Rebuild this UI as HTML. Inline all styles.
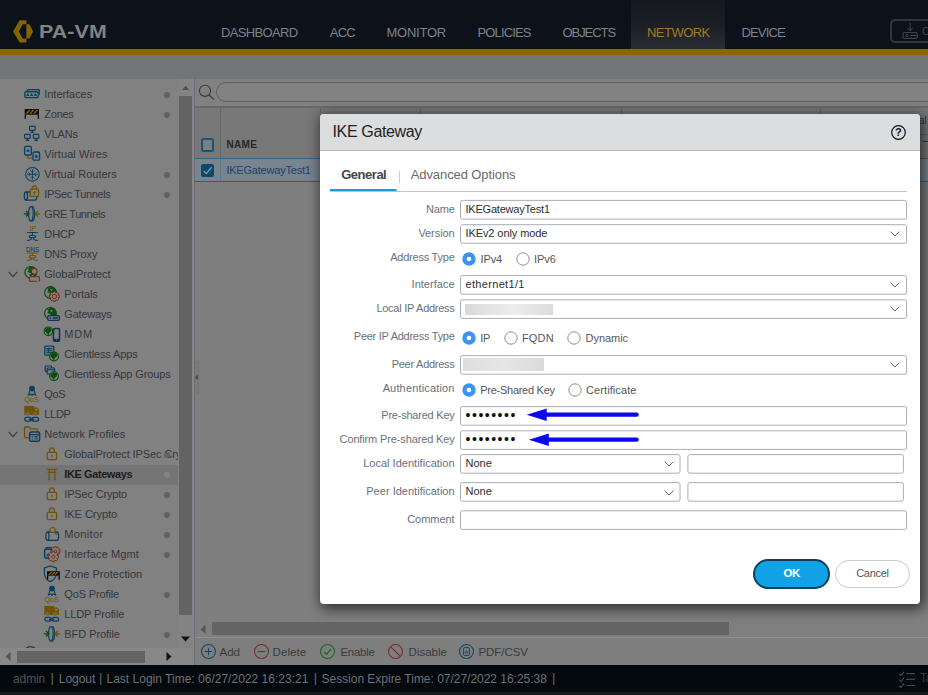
<!DOCTYPE html>
<html><head><meta charset="utf-8"><title>PA-VM</title>
<style>
html,body{margin:0;padding:0;}
body{width:928px;height:695px;overflow:hidden;position:relative;background:#7f7f7f;font-family:"Liberation Sans",sans-serif;}
.a{position:absolute;box-sizing:border-box;}
.t{position:absolute;white-space:nowrap;}
svg{overflow:visible;}
</style></head><body>
<div class="a" style="left:0.00px;top:0.00px;width:928.00px;height:49.00px;background:#0d111a;"></div>
<div class="a" style="left:631.00px;top:0.00px;width:94.00px;height:49.00px;background:linear-gradient(#15181f 0%,#1b1e25 50%,#2a2d33 100%);"></div>
<div class="a" style="left:0.00px;top:49.00px;width:928.00px;height:6.00px;background:#866700;"></div>
<div class="a" style="left:0.00px;top:55.00px;width:928.00px;height:24.00px;background:#737476;"></div>
<svg class="a" style="left:13.00px;top:19.50px;" width="20.5" height="22.8" viewBox="0 0 20.5 22.8"><path d="M6.7 0.2 L13.4 0.2 L13.4 4.3 L9.7 4.3 L5.8 11.4 L9.7 18.4 L13.4 18.4 L13.4 22.6 L6.7 22.6 L0 11.4 Z" fill="#846400"/><path d="M13.4 4.3 L16.5 4.3 L20.1 11.4 L16.5 18.4 L13.4 18.4 Z" fill="#846400"/></svg>
<span class="t" style="left:38.6px;top:21.7px;font-size:18.5px;line-height:20.6px;font-weight:bold;color:#828282;transform-origin:0 0;transform:scaleX(1.155);letter-spacing:0.1px;">PA-VM</span>
<span class="t " style="left:221.00px;top:26.03px;font-size:13px;line-height:14.52px;letter-spacing:-0.661px;color:#7d838a;">DASHBOARD</span>
<span class="t " style="left:329.80px;top:26.03px;font-size:13px;line-height:14.52px;letter-spacing:-0.816px;color:#7d838a;">ACC</span>
<span class="t " style="left:386.50px;top:26.03px;font-size:13px;line-height:14.52px;letter-spacing:-0.235px;color:#7d838a;">MONITOR</span>
<span class="t " style="left:477.50px;top:26.03px;font-size:13px;line-height:14.52px;letter-spacing:-0.871px;color:#7d838a;">POLICIES</span>
<span class="t " style="left:562.50px;top:26.03px;font-size:13px;line-height:14.52px;letter-spacing:-1.065px;color:#7d838a;">OBJECTS</span>
<span class="t " style="left:647.00px;top:26.03px;font-size:13px;line-height:14.52px;letter-spacing:-0.535px;color:#a37b20;">NETWORK</span>
<span class="t " style="left:741.50px;top:26.03px;font-size:13px;line-height:14.52px;letter-spacing:-0.850px;color:#7d838a;">DEVICE</span>
<div class="a" style="left:890.00px;top:19.00px;width:50.00px;height:24.20px;border:2.1px solid #31353c;border-radius:5px;"></div>
<svg class="a" style="left:901.50px;top:23.00px;" width="16" height="16" viewBox="0 0 16 16"><g fill="none" stroke="#474b52" stroke-width="1"><path d="M8.1 0.1 V7.6 M5.7 5.1 L8.1 7.7 L10.5 5.1"/><rect x="1.1" y="9.6" width="14.1" height="5.8" rx="1"/><circle cx="4.9" cy="12.5" r="1.05"/><path d="M8.8 12.5 H14.6"/></g></svg>
<span class="t " style="left:922.00px;top:25.34px;font-size:11px;line-height:12.29px;letter-spacing:0.044px;color:#43474e;">Commit</span>
<div class="a" style="left:0.00px;top:79.00px;width:178.00px;height:586.00px;background:#818181;"></div>
<div class="a" style="left:0.00px;top:465.00px;width:178.00px;height:20.00px;background:#747474;"></div>
<div class="a" style="left:177.50px;top:79.00px;width:15.00px;height:570.00px;background:#838383;"></div>
<div class="a" style="left:179.00px;top:96.00px;width:12.80px;height:518.50px;background:#636363;"></div>
<svg class="a" style="left:181.00px;top:85.00px;" width="9" height="6" viewBox="0 0 9 6"><path d="M1 4.9 L4.6 0.8 L8.2 4.9 Z" fill="#505050"/></svg>
<svg class="a" style="left:181.00px;top:636.00px;" width="9" height="6" viewBox="0 0 9 6"><path d="M0 0.5 L4.5 5.5 L9 0.5 Z" fill="#111"/></svg>
<div class="a" style="left:192.00px;top:79.00px;width:2.80px;height:586.00px;background:#868686;border-right:1px solid #686d75;"></div>
<div class="a" style="left:0.00px;top:648.00px;width:192.30px;height:17.00px;background:#888;"></div>
<div class="a" style="left:17.00px;top:650.50px;width:127.50px;height:12.00px;background:#646464;"></div>
<svg class="a" style="left:5.00px;top:652.00px;" width="6" height="9" viewBox="0 0 6 9"><path d="M5.5 0 L0.5 4.5 L5.5 9 Z" fill="#555"/></svg>
<svg class="a" style="left:166.00px;top:652.00px;" width="6" height="9" viewBox="0 0 6 9"><path d="M0.5 0 L5.5 4.5 L0.5 9 Z" fill="#111"/></svg>
<div class="a" style="left:0;top:79px;width:177.5px;height:569px;overflow:hidden;">
<span class="t " style="left:44.30px;top:9.04px;font-size:11px;line-height:12.29px;letter-spacing:-0.050px;color:#35353b;">Interfaces</span>
<svg class="a" style="left:163.00px;top:12.00px;" width="8" height="8" viewBox="0 0 8 8"><circle cx="4" cy="4.1" r="3.05" fill="#626262"/></svg>
<span class="t " style="left:44.30px;top:29.05px;font-size:11px;line-height:12.29px;letter-spacing:-0.254px;color:#35353b;">Zones</span>
<svg class="a" style="left:163.00px;top:32.00px;" width="8" height="8" viewBox="0 0 8 8"><circle cx="4" cy="4.1" r="3.05" fill="#626262"/></svg>
<span class="t " style="left:44.30px;top:49.05px;font-size:11px;line-height:12.29px;letter-spacing:-0.139px;color:#35353b;">VLANs</span>
<span class="t " style="left:44.30px;top:69.05px;font-size:11px;line-height:12.29px;letter-spacing:0.084px;color:#35353b;">Virtual Wires</span>
<span class="t " style="left:44.30px;top:89.05px;font-size:11px;line-height:12.29px;letter-spacing:-0.010px;color:#35353b;">Virtual Routers</span>
<svg class="a" style="left:163.00px;top:92.00px;" width="8" height="8" viewBox="0 0 8 8"><circle cx="4" cy="4.1" r="3.05" fill="#626262"/></svg>
<span class="t " style="left:44.30px;top:109.05px;font-size:11px;line-height:12.29px;letter-spacing:-0.373px;color:#35353b;">IPSec Tunnels</span>
<svg class="a" style="left:163.00px;top:112.00px;" width="8" height="8" viewBox="0 0 8 8"><circle cx="4" cy="4.1" r="3.05" fill="#626262"/></svg>
<span class="t " style="left:44.30px;top:129.04px;font-size:11px;line-height:12.29px;letter-spacing:-0.431px;color:#35353b;">GRE Tunnels</span>
<span class="t " style="left:44.30px;top:149.04px;font-size:11px;line-height:12.29px;letter-spacing:-0.113px;color:#35353b;">DHCP</span>
<span class="t " style="left:44.30px;top:169.04px;font-size:11px;line-height:12.29px;letter-spacing:-0.160px;color:#35353b;">DNS Proxy</span>
<span class="t " style="left:44.30px;top:189.04px;font-size:11px;line-height:12.29px;letter-spacing:-0.027px;color:#35353b;">GlobalProtect</span>
<span class="t " style="left:64.30px;top:209.04px;font-size:11px;line-height:12.29px;letter-spacing:-0.130px;color:#35353b;">Portals</span>
<span class="t " style="left:64.30px;top:229.04px;font-size:11px;line-height:12.29px;letter-spacing:-0.200px;color:#35353b;">Gateways</span>
<span class="t " style="left:64.30px;top:249.04px;font-size:11px;line-height:12.29px;letter-spacing:0.840px;color:#35353b;">MDM</span>
<span class="t " style="left:64.30px;top:269.05px;font-size:11px;line-height:12.29px;letter-spacing:-0.128px;color:#35353b;">Clientless Apps</span>
<span class="t " style="left:64.30px;top:289.05px;font-size:11px;line-height:12.29px;letter-spacing:-0.118px;color:#35353b;">Clientless App Groups</span>
<span class="t " style="left:44.30px;top:309.05px;font-size:11px;line-height:12.29px;letter-spacing:-0.412px;color:#35353b;">QoS</span>
<span class="t " style="left:44.30px;top:329.05px;font-size:11px;line-height:12.29px;letter-spacing:-0.312px;color:#35353b;">LLDP</span>
<span class="t " style="left:44.30px;top:349.05px;font-size:11px;line-height:12.29px;letter-spacing:0.058px;color:#35353b;">Network Profiles</span>
<span class="t " style="left:64.30px;top:369.05px;font-size:11px;line-height:12.29px;letter-spacing:-0.102px;color:#35353b;">GlobalProtect IPSec Crypto</span>
<svg class="a" style="left:163.00px;top:372.00px;" width="8" height="8" viewBox="0 0 8 8"><circle cx="4" cy="4.1" r="3.05" fill="#626262"/></svg>
<span class="t " style="left:64.30px;top:389.05px;font-size:11px;line-height:12.29px;letter-spacing:-0.411px;color:#1c1c1c;font-weight:bold;">IKE Gateways</span>
<svg class="a" style="left:163.00px;top:392.00px;" width="8" height="8" viewBox="0 0 8 8"><circle cx="4" cy="4.1" r="3.05" fill="#848484"/></svg>
<span class="t " style="left:64.30px;top:409.05px;font-size:11px;line-height:12.29px;letter-spacing:-0.173px;color:#35353b;">IPSec Crypto</span>
<svg class="a" style="left:163.00px;top:412.00px;" width="8" height="8" viewBox="0 0 8 8"><circle cx="4" cy="4.1" r="3.05" fill="#626262"/></svg>
<span class="t " style="left:64.30px;top:429.05px;font-size:11px;line-height:12.29px;letter-spacing:-0.041px;color:#35353b;">IKE Crypto</span>
<svg class="a" style="left:163.00px;top:432.00px;" width="8" height="8" viewBox="0 0 8 8"><circle cx="4" cy="4.1" r="3.05" fill="#626262"/></svg>
<span class="t " style="left:64.30px;top:449.05px;font-size:11px;line-height:12.29px;letter-spacing:0.362px;color:#35353b;">Monitor</span>
<svg class="a" style="left:163.00px;top:452.00px;" width="8" height="8" viewBox="0 0 8 8"><circle cx="4" cy="4.1" r="3.05" fill="#626262"/></svg>
<span class="t " style="left:64.30px;top:469.05px;font-size:11px;line-height:12.29px;letter-spacing:0.083px;color:#35353b;">Interface Mgmt</span>
<svg class="a" style="left:163.00px;top:472.00px;" width="8" height="8" viewBox="0 0 8 8"><circle cx="4" cy="4.1" r="3.05" fill="#626262"/></svg>
<span class="t " style="left:64.30px;top:489.05px;font-size:11px;line-height:12.29px;letter-spacing:0.016px;color:#35353b;">Zone Protection</span>
<span class="t " style="left:64.30px;top:509.05px;font-size:11px;line-height:12.29px;letter-spacing:-0.142px;color:#35353b;">QoS Profile</span>
<svg class="a" style="left:163.00px;top:512.00px;" width="8" height="8" viewBox="0 0 8 8"><circle cx="4" cy="4.1" r="3.05" fill="#626262"/></svg>
<span class="t " style="left:64.30px;top:529.04px;font-size:11px;line-height:12.29px;letter-spacing:-0.140px;color:#35353b;">LLDP Profile</span>
<span class="t " style="left:64.30px;top:549.04px;font-size:11px;line-height:12.29px;letter-spacing:-0.057px;color:#35353b;">BFD Profile</span>
<svg class="a" style="left:163.00px;top:552.00px;" width="8" height="8" viewBox="0 0 8 8"><circle cx="4" cy="4.1" r="3.05" fill="#626262"/></svg>
</div>
<svg class="a" style="left:8.00px;top:270.50px;" width="10" height="7" viewBox="0 0 10 7"><path d="M0.7 0.8 L5 5.6 L9.3 0.8" fill="none" stroke="#3a3a3a" stroke-width="1.1"/></svg>
<svg class="a" style="left:8.00px;top:430.50px;" width="10" height="7" viewBox="0 0 10 7"><path d="M0.7 0.8 L5 5.6 L9.3 0.8" fill="none" stroke="#3a3a3a" stroke-width="1.1"/></svg>
<svg class="a" style="left:24.00px;top:82.00px;" width="20" height="24" viewBox="0 -12 20 24"><path d="M3.2 -3.1 V-3.6 a0.8 0.8 0 0 1 0.8 -0.8 H14.5 a0.8 0.8 0 0 1 0.8 0.8 V-0.3 a0.8 0.8 0 0 1 -0.8 0.8" fill="none" stroke="#083f5f" stroke-width="1.24"/><rect x="0.8" y="-2.3" width="13.5" height="5.9" rx="1.5" fill="none" stroke="#083f5f" stroke-width="1.35"/><path d="M2.5 2 v-1.4 h0.7 v-1 h1.2 v1 h0.7 v1.4 Z M6.3 2 v-1.4 h0.7 v-1 h1.2 v1 h0.7 v1.4 Z M10.1 2 v-1.4 h0.7 v-1 h1.2 v1 h0.7 v1.4 Z" fill="#083f5f"/></svg>
<svg class="a" style="left:24.00px;top:102.00px;" width="20" height="24" viewBox="0 -12 20 24"><rect x="0.7" y="-5" width="14.3" height="5.7" fill="#0a0a0a"/><path d="M1.6 -0.2 l3 -3.9 l2 0 l-3 3.9 Z" fill="#7d6200"/><path d="M5.35 -0.2 l3 -3.9 l2 0 l-3 3.9 Z" fill="#7d6200"/><path d="M9.1 -0.2 l3 -3.9 l2 0 l-3 3.9 Z" fill="#7d6200"/><path d="M1.3 0.7 v4.1 M14.4 0.7 v4.1" stroke="#0a0a0a" stroke-width="1.30"/></svg>
<svg class="a" style="left:24.00px;top:122.00px;" width="20" height="24" viewBox="0 -12 20 24"><rect x="5.5" y="-7.7" width="5.6" height="4" rx="0.8" fill="none" stroke="#083f5f" stroke-width="1.19"/><path d="M8.3 -3.7 v1.8 M6.5 -1.7 h3.6" stroke="#083f5f" stroke-width="1.19"/><rect x="0.6" y="0.4" width="5.6" height="4" rx="0.8" fill="none" stroke="#083f5f" stroke-width="1.19"/><path d="M3.4 4.4 v1.8 M1.6 6.4 h3.6" stroke="#083f5f" stroke-width="1.19"/><rect x="9.3" y="0.4" width="5.6" height="4" rx="0.8" fill="none" stroke="#083f5f" stroke-width="1.19"/><path d="M12.1 4.4 v1.8 M10.3 6.4 h3.6" stroke="#083f5f" stroke-width="1.19"/></svg>
<svg class="a" style="left:24.00px;top:142.00px;" width="20" height="24" viewBox="0 -12 20 24"><path d="M3.6 1 V3.2 a1 1 0 0 0 1 1 H9" fill="none" stroke="#705200" stroke-width="1.30"/><rect x="0.6" y="-7.6" width="6.8" height="8.6" rx="1.2" fill="#6c8494" stroke="#083f5f" stroke-width="1.30"/><path d="M2.6 -2.2 v-1.6 h0.8 v-1 h1.2 v1 h0.8 v1.6 Z" fill="#083f5f"/><rect x="9" y="-2" width="6.6" height="8.2" rx="1.2" fill="#6c8494" stroke="#083f5f" stroke-width="1.30"/><path d="M10.9 3.4 v-1.6 h0.8 v-1 h1.2 v1 h0.8 v1.6 Z" fill="#083f5f"/></svg>
<svg class="a" style="left:24.00px;top:162.00px;" width="20" height="24" viewBox="0 -12 20 24"><circle cx="8.4" cy="0.3" r="6.8" fill="none" stroke="#083f5f" stroke-width="1.08"/><path d="M8.4 -4.9 V5.5 M3.2 0.3 H13.6" fill="none" stroke="#083f5f" stroke-width="0.92"/><path d="M6.5 -3.6 L8.4 -1.7 L10.3 -3.6 M6.5 4.2 L8.4 2.3 L10.3 4.2 M4.5 -1.6 L6.4 0.3 L4.5 2.2 M12.3 -1.6 L10.4 0.3 L12.3 2.2" fill="none" stroke="#083f5f" stroke-width="0.92"/></svg>
<svg class="a" style="left:24.00px;top:182.00px;" width="20" height="24" viewBox="0 -12 20 24"><path d="M1.9 -2 H11.2 a1.6 4.1 0 0 1 0 8.2 H1.9" fill="none" stroke="#083f5f" stroke-width="1.30"/><ellipse cx="1.9" cy="2.1" rx="1.6" ry="4.1" fill="none" stroke="#083f5f" stroke-width="1.30"/><rect x="6.3" y="-4.8" width="8.2" height="7.2" rx="1" fill="#818181"/><rect x="6.3" y="-4.8" width="8.2" height="7.2" rx="1" fill="none" stroke="#6e5206" stroke-width="1.30"/><path d="M8.35 -4.8 v-1.1 a2.05 2.214 0 0 1 4.1 0 v1.1" fill="none" stroke="#6e5206" stroke-width="1.19"/><rect x="9.6" y="-2.1" width="1.6" height="1.6" fill="#6e5206"/><circle cx="10.4" cy="-1.7" r="1.1" fill="#6e5206"/><path d="M10.4 -1.5 V0.6" stroke="#6e5206" stroke-width="0.97"/></svg>
<svg class="a" style="left:24.00px;top:202.00px;" width="20" height="24" viewBox="0 -12 20 24"><ellipse cx="6.9" cy="-0.2" rx="2.3" ry="7.3" fill="none" stroke="#083f5f" stroke-width="1.19"/><path d="M7.4 -7.4 H8.6 A2.3 7.3 0 0 1 8.6 7 H7.4" fill="none" stroke="#083f5f" stroke-width="1.08"/><path d="M-0.2 -0.2 H4.6 M2 -3 L4.8 -0.2 L2 2.6" fill="none" stroke="#0b4c10" stroke-width="1.35"/><path d="M16 -0.2 H11.2 M13.8 -3 L11 -0.2 L13.8 2.6" fill="none" stroke="#705200" stroke-width="1.35"/></svg>
<svg class="a" style="left:24.00px;top:222.00px;" width="20" height="24" viewBox="0 -12 20 24"><text x="5.6" y="-2.6" font-family="Liberation Sans,sans-serif" font-size="6.3" font-weight="normal" fill="#705200" textLength="6.8" lengthAdjust="spacingAndGlyphs">IP</text><path d="M3.1 -1.4 H13.8 M8.4 -1.4 V1.1 M7.7 3.8 C7.7 6.4 5.5 6.4 3.1 6.4 M9.1 3.8 C9.1 6.4 11.3 6.4 13.8 6.4" fill="none" stroke="#083f5f" stroke-width="1.03"/><ellipse cx="8.4" cy="2.5" rx="3.2" ry="1.35" fill="none" stroke="#083f5f" stroke-width="1.03"/></svg>
<svg class="a" style="left:24.00px;top:242.00px;" width="20" height="24" viewBox="0 -12 20 24"><text x="1.9" y="-2.4" font-family="Liberation Sans,sans-serif" font-size="6.3" font-weight="normal" fill="#083f5f" textLength="13.4" lengthAdjust="spacingAndGlyphs">DNS</text><path d="M3.1 -0.9 H13.8 M8.4 -0.9 V1.3 M7.7 4 C7.7 6.4 5.5 6.4 3.1 6.4 M9.1 4 C9.1 6.4 11.3 6.4 13.8 6.4" fill="none" stroke="#705200" stroke-width="1.03"/><ellipse cx="8.4" cy="2.7" rx="3.2" ry="1.35" fill="none" stroke="#705200" stroke-width="1.03"/></svg>
<svg class="a" style="left:24.00px;top:262.00px;" width="20" height="24" viewBox="0 -12 20 24"><circle cx="6.7" cy="-1.7" r="5.8" fill="#818181" stroke="#0b4c10" stroke-width="1.13"/><path d="M6.12 -7.5 A5.8 5.8 0 0 1 8.15 3.926 L5.25 0.91 L7.28 -0.83 L3.51 -1.99 L4.96 -4.02 L3.22 -5.18 L4.96 -5.76 Z" fill="#0b4c10"/><path d="M6.41 -5.18 l2.9 0.696 l-1.856 1.74 Z M7.28 1.2 l2.436 -0.696 l-0.87 2.088 Z" fill="#818181"/><circle cx="10.3" cy="-2.6" r="2.95" fill="#818181" stroke="#74280c" stroke-width="1.03"/><path d="M5.4 7.2 V3.9 a1.2 1.2 0 0 1 1.2 -1.2 H15.3 V7.4 M5.4 7.2 H13.2" fill="#818181" stroke="#74280c" stroke-width="1.03"/></svg>
<svg class="a" style="left:44.00px;top:282.00px;" width="20" height="24" viewBox="0 -12 20 24"><circle cx="6.4" cy="-1.6" r="5.8" fill="#818181" stroke="#0b4c10" stroke-width="1.13"/><path d="M5.82 -7.4 A5.8 5.8 0 0 1 7.85 4.026 L4.95 1.01 L6.98 -0.73 L3.21 -1.89 L4.66 -3.92 L2.92 -5.08 L4.66 -5.66 Z" fill="#0b4c10"/><path d="M6.11 -5.08 l2.9 0.696 l-1.856 1.74 Z M6.98 1.3 l2.436 -0.696 l-0.87 2.088 Z" fill="#818181"/><path d="M14.07 1.08 L15.39 1.35 L15.39 3.45 L14.07 3.72 L13.93 4.06 L14.67 5.19 L13.19 6.67 L12.06 5.93 L11.72 6.07 L11.45 7.39 L9.35 7.39 L9.08 6.07 L8.74 5.93 L7.61 6.67 L6.13 5.19 L6.87 4.06 L6.73 3.72 L5.41 3.45 L5.41 1.35 L6.73 1.08 L6.87 0.74 L6.13 -0.39 L7.61 -1.87 L8.74 -1.13 L9.08 -1.27 L9.35 -2.59 L11.45 -2.59 L11.72 -1.27 L12.06 -1.13 L13.19 -1.87 L14.67 -0.39 L13.93 0.74 Z" fill="#818181" stroke="#74280c" stroke-width="0.97" stroke-linejoin="round"/><circle cx="10.4" cy="2.4" r="2.2" fill="none" stroke="#74280c" stroke-width="0.97"/></svg>
<svg class="a" style="left:44.00px;top:302.00px;" width="20" height="24" viewBox="0 -12 20 24"><circle cx="6.4" cy="-0.7" r="5.8" fill="#818181" stroke="#0b4c10" stroke-width="1.13"/><path d="M5.82 -6.5 A5.8 5.8 0 0 1 7.85 4.926 L4.95 1.91 L6.98 0.17 L3.21 -0.99 L4.66 -3.02 L2.92 -4.18 L4.66 -4.76 Z" fill="#0b4c10"/><path d="M6.11 -4.18 l2.9 0.696 l-1.856 1.74 Z M6.98 2.2 l2.436 -0.696 l-0.87 2.088 Z" fill="#818181"/><rect x="3.8" y="1.7" width="11.6" height="4.6" rx="1.3" fill="#818181" stroke="#0a3352" stroke-width="1.30"/><path d="M5.6 4 h1.5 M8.6 4 h5.4" stroke="#0a3352" stroke-width="1.40"/></svg>
<svg class="a" style="left:44.00px;top:322.00px;" width="20" height="24" viewBox="0 -12 20 24"><circle cx="4.4" cy="-2.7" r="4.3" fill="#818181" stroke="#0b4c10" stroke-width="1.13"/><path d="M1.39 -4.85 l2.58 -1.72 l3.655 1.29 l-0.43 2.58 l-2.15 1.72 l-0.43 2.58 l-1.72 -2.58 l-1.935 -1.505 Z" fill="#0b4c10"/><rect x="9.5" y="-5.4" width="6" height="12.6" rx="1.3" fill="#818181" stroke="#0a3352" stroke-width="1.51"/><path d="M9.6 5.9 h5.8" stroke="#0a3352" stroke-width="2.16"/><circle cx="12.5" cy="6" r="0.5" fill="#818181"/></svg>
<svg class="a" style="left:44.00px;top:342.00px;" width="20" height="24" viewBox="0 -12 20 24"><rect x="0.8" y="-7.8" width="9" height="9" rx="0.8" fill="none" stroke="#083f5f" stroke-width="1.30"/><path d="M2.2 -5.4 h6.2 M2.2 -3.3 h6.2 M2.2 -1.2 h6.2 M4.4 -5.4 v4.2" stroke="#083f5f" stroke-width="1.08"/><circle cx="10" cy="2.5" r="4.4" fill="#818181" stroke="#0b4c10" stroke-width="1.13"/><path d="M6.92 0.3 l2.64 -1.76 l3.74 1.32 l-0.44 2.64 l-2.2 1.76 l-0.44 2.64 l-1.76 -2.64 l-1.98 -1.54 Z" fill="#0b4c10"/></svg>
<svg class="a" style="left:44.00px;top:362.00px;" width="20" height="24" viewBox="0 -12 20 24"><rect x="1.2" y="-8" width="6.4" height="5.6" rx="0.8" fill="none" stroke="#083f5f" stroke-width="1.19"/><rect x="3.2" y="-6" width="7.4" height="6" rx="0.8" fill="#818181" stroke="#083f5f" stroke-width="1.19"/><path d="M3.4 -4.2 h7" stroke="#083f5f" stroke-width="1.08"/><circle cx="10" cy="2.2" r="4.4" fill="#818181" stroke="#0b4c10" stroke-width="1.13"/><path d="M6.92 0 l2.64 -1.76 l3.74 1.32 l-0.44 2.64 l-2.2 1.76 l-0.44 2.64 l-1.76 -2.64 l-1.98 -1.54 Z" fill="#0b4c10"/></svg>
<svg class="a" style="left:24.00px;top:382.00px;" width="20" height="24" viewBox="0 -12 20 24"><circle cx="8" cy="-5.4" r="2.9" fill="#083f5f"/><path d="M6 -3.6 L4.4 1 L6.8 0 L8 1.4 L9.2 0 L11.6 1 L10 -3.6" fill="none" stroke="#083f5f" stroke-width="1.08"/><text x="0.4" y="7.7" font-family="Liberation Sans,sans-serif" font-size="7.4" fill="#705200" textLength="14.6" lengthAdjust="spacingAndGlyphs">QoS</text></svg>
<svg class="a" style="left:24.00px;top:402.00px;" width="20" height="24" viewBox="0 -12 20 24"><path d="M0.3 -8 h9 a1 1 0 0 1 1 1 v0.6 h3 l1.7 2 v5.4 h-14.7 Z" fill="#705200"/><rect x="11.2" y="-5.3" width="2.3" height="1.8" fill="#818181"/><circle cx="3.6" cy="0.2" r="1.8" fill="#705200" stroke="#818181" stroke-width="0.65"/><circle cx="11.3" cy="0.2" r="1.8" fill="#705200" stroke="#818181" stroke-width="0.65"/><circle cx="3.6" cy="0.2" r="0.6" fill="#818181"/><circle cx="11.3" cy="0.2" r="0.6" fill="#818181"/><rect x="0.8" y="3.3" width="6.4" height="3.9" rx="1.95" fill="none" stroke="#083f5f" stroke-width="1.30"/><rect x="8.2" y="3.3" width="6.4" height="3.9" rx="1.95" fill="none" stroke="#083f5f" stroke-width="1.30"/><path d="M5 5.25 H10.4" stroke="#083f5f" stroke-width="1.30"/></svg>
<svg class="a" style="left:24.00px;top:422.00px;" width="20" height="24" viewBox="0 -12 20 24"><path d="M0.6 3.6 V-6.2 a0.8 0.8 0 0 1 0.8 -0.8 H5 l1.6 1.8 H12.6 a0.8 0.8 0 0 1 0.8 0.8 V-2.4 M0.6 3.6 H5" fill="none" stroke="#705200" stroke-width="1.30"/><rect x="5.6" y="-2" width="10" height="9.2" rx="1.4" fill="#818181" stroke="#083f5f" stroke-width="1.40"/><path d="M5.8 0.6 H15.4" stroke="#083f5f" stroke-width="1.30"/><path d="M7.6 2.8 h1.6 M10.4 2.8 h3.4 M7.6 5 h1.6 M10.4 5 h3.4" stroke="#083f5f" stroke-width="1.19"/></svg>
<svg class="a" style="left:44.00px;top:442.00px;" width="20" height="24" viewBox="0 -12 20 24"><rect x="3.2" y="-1.6" width="9.4" height="7.2" rx="1" fill="none" stroke="#6e5206" stroke-width="1.30"/><path d="M5.55 -1.6 v-2 a2.35 2.538 0 0 1 4.7 0 v2" fill="none" stroke="#6e5206" stroke-width="1.19"/><rect x="7.1" y="1.1" width="1.6" height="1.6" fill="#6e5206"/></svg>
<svg class="a" style="left:44.00px;top:482.00px;" width="20" height="24" viewBox="0 -12 20 24"><rect x="3.2" y="-1.6" width="9.4" height="7.2" rx="1" fill="none" stroke="#6e5206" stroke-width="1.30"/><path d="M5.55 -1.6 v-2 a2.35 2.538 0 0 1 4.7 0 v2" fill="none" stroke="#6e5206" stroke-width="1.19"/><rect x="7.1" y="1.1" width="1.6" height="1.6" fill="#6e5206"/></svg>
<svg class="a" style="left:44.00px;top:502.00px;" width="20" height="24" viewBox="0 -12 20 24"><rect x="3.2" y="-1.6" width="9.4" height="7.2" rx="1" fill="none" stroke="#6e5206" stroke-width="1.30"/><path d="M5.55 -1.6 v-2 a2.35 2.538 0 0 1 4.7 0 v2" fill="none" stroke="#6e5206" stroke-width="1.19"/><rect x="7.1" y="1.1" width="1.6" height="1.6" fill="#6e5206"/></svg>
<svg class="a" style="left:44.00px;top:462.00px;" width="20" height="24" viewBox="0 -12 20 24"><path d="M2.6 -5.2 Q8 -3.6 13.4 -5.2" fill="none" stroke="#6e5206" stroke-width="1.40"/><path d="M3.6 -1.6 H12.4 M5.2 -4.2 V5.4 M10.8 -4.2 V5.4 M4.2 5.6 h2 M9.8 5.6 h2" fill="none" stroke="#6e5206" stroke-width="1.19"/></svg>
<svg class="a" style="left:44.00px;top:522.00px;" width="20" height="24" viewBox="0 -12 20 24"><path d="M3.4 -2 H13 a1.6 4.2 0 0 1 0 8.4 H3.4" fill="none" stroke="#083f5f" stroke-width="1.30"/><ellipse cx="3.4" cy="2.2" rx="1.6" ry="4.2" fill="none" stroke="#083f5f" stroke-width="1.30"/><circle cx="8.6" cy="-4" r="2.6" fill="#818181" stroke="#6e5206" stroke-width="1.03"/><path d="M10.5 -2.1 L12.8 0.9" stroke="#6e5206" stroke-width="1.19"/></svg>
<svg class="a" style="left:44.00px;top:542.00px;" width="20" height="24" viewBox="0 -12 20 24"><path d="M2 -5 V-6.4 H8" fill="none" stroke="#083f5f" stroke-width="1.08"/><rect x="0.6" y="-4.8" width="8.6" height="8.8" rx="1.2" fill="none" stroke="#083f5f" stroke-width="1.40"/><path d="M2.6 2 v-1.6 h0.8 v-1 h1.2 v1 h0.8 v1.6 Z" fill="#083f5f"/><path d="M14.79 -3.89 L16.10 -3.67 L16.10 -1.73 L14.79 -1.51 L14.67 -1.21 L15.44 -0.13 L14.07 1.24 L12.99 0.47 L12.69 0.59 L12.47 1.90 L10.53 1.90 L10.31 0.59 L10.01 0.47 L8.93 1.24 L7.56 -0.13 L8.33 -1.21 L8.21 -1.51 L6.90 -1.73 L6.90 -3.67 L8.21 -3.89 L8.33 -4.19 L7.56 -5.27 L8.93 -6.64 L10.01 -5.87 L10.31 -5.99 L10.53 -7.30 L12.47 -7.30 L12.69 -5.99 L12.99 -5.87 L14.07 -6.64 L15.44 -5.27 L14.67 -4.19 Z" fill="#818181" stroke="#74280c" stroke-width="0.86" stroke-linejoin="round"/><circle cx="11.5" cy="-2.7" r="1.3" fill="none" stroke="#74280c" stroke-width="0.86"/><path d="M13.06 1.25 L14.49 1.51 L14.49 3.69 L13.06 3.95 L12.92 4.30 L13.74 5.50 L12.20 7.04 L11.00 6.22 L10.65 6.36 L10.39 7.79 L8.21 7.79 L7.95 6.36 L7.60 6.22 L6.40 7.04 L4.86 5.50 L5.68 4.30 L5.54 3.95 L4.11 3.69 L4.11 1.51 L5.54 1.25 L5.68 0.90 L4.86 -0.30 L6.40 -1.84 L7.60 -1.02 L7.95 -1.16 L8.21 -2.59 L10.39 -2.59 L10.65 -1.16 L11.00 -1.02 L12.20 -1.84 L13.74 -0.30 L12.92 0.90 Z" fill="#818181" stroke="#74280c" stroke-width="0.92" stroke-linejoin="round"/><circle cx="9.3" cy="2.6" r="1.6" fill="none" stroke="#74280c" stroke-width="0.92"/></svg>
<svg class="a" style="left:44.00px;top:562.00px;" width="20" height="24" viewBox="0 -12 20 24"><path d="M6.4 -8 L12.4 -6 V-1 Q12.4 5 6.4 7.6 Q0.4 5 0.4 -1 V-6 Z" fill="none" stroke="#083f5f" stroke-width="1.19"/><rect x="3" y="-2.8" width="12.8" height="4.4" fill="#0a0a0a"/><path d="M3.9 0.7 l3 -2.6 l2 0 l-3 2.6 Z" fill="#7d6200"/><path d="M6.9 0.7 l3 -2.6 l2 0 l-3 2.6 Z" fill="#7d6200"/><path d="M9.9 0.7 l3 -2.6 l2 0 l-3 2.6 Z" fill="#7d6200"/><path d="M3.6 1.6 v4.2 M15.2 1.6 v4.2" stroke="#0a0a0a" stroke-width="1.30"/></svg>
<svg class="a" style="left:44.00px;top:582.00px;" width="20" height="24" viewBox="0 -12 20 24"><circle cx="8" cy="-5.4" r="2.9" fill="#083f5f"/><path d="M6 -3.6 L4.4 1 L6.8 0 L8 1.4 L9.2 0 L11.6 1 L10 -3.6" fill="none" stroke="#083f5f" stroke-width="1.08"/><text x="0.4" y="7.7" font-family="Liberation Sans,sans-serif" font-size="7.4" fill="#705200" textLength="14.6" lengthAdjust="spacingAndGlyphs">QoS</text></svg>
<svg class="a" style="left:44.00px;top:602.00px;" width="20" height="24" viewBox="0 -12 20 24"><path d="M0.3 -8 h9 a1 1 0 0 1 1 1 v0.6 h3 l1.7 2 v5.4 h-14.7 Z" fill="#705200"/><rect x="11.2" y="-5.3" width="2.3" height="1.8" fill="#818181"/><circle cx="3.6" cy="0.2" r="1.8" fill="#705200" stroke="#818181" stroke-width="0.65"/><circle cx="11.3" cy="0.2" r="1.8" fill="#705200" stroke="#818181" stroke-width="0.65"/><circle cx="3.6" cy="0.2" r="0.6" fill="#818181"/><circle cx="11.3" cy="0.2" r="0.6" fill="#818181"/><rect x="0.8" y="3.3" width="6.4" height="3.9" rx="1.95" fill="none" stroke="#083f5f" stroke-width="1.30"/><rect x="8.2" y="3.3" width="6.4" height="3.9" rx="1.95" fill="none" stroke="#083f5f" stroke-width="1.30"/><path d="M5 5.25 H10.4" stroke="#083f5f" stroke-width="1.30"/></svg>
<svg class="a" style="left:44.00px;top:622.00px;" width="20" height="24" viewBox="0 -12 20 24"><ellipse cx="6.9" cy="-0.2" rx="2.3" ry="7.3" fill="none" stroke="#083f5f" stroke-width="1.19"/><path d="M7.4 -7.4 H8.6 A2.3 7.3 0 0 1 8.6 7 H7.4" fill="none" stroke="#083f5f" stroke-width="1.08"/><path d="M-0.2 -0.2 H4.6 M2 -3 L4.8 -0.2 L2 2.6" fill="none" stroke="#0b4c10" stroke-width="1.35"/><path d="M16 -0.2 H11.2 M13.8 -3 L11 -0.2 L13.8 2.6" fill="none" stroke="#705200" stroke-width="1.35"/></svg>
<div class="a" style="left:0.00px;top:640.00px;width:177.00px;height:8.00px;overflow:hidden;"><svg style="position:absolute;left:24px;top:5.6px" width="14" height="14"><circle cx="6.6" cy="6.6" r="6" fill="none" stroke="#0b4c10" stroke-width="1.4"/></svg></div>
<div class="a" style="left:194.80px;top:79.00px;width:734.00px;height:28.30px;background:#818181;border-bottom:1px solid #6a6a6a;"></div>
<div class="a" style="left:216.00px;top:82.20px;width:730.00px;height:19.60px;background:#828282;border:1px solid #606060;border-radius:10px;"></div>
<svg class="a" style="left:197.50px;top:84.00px;" width="17" height="17" viewBox="0 0 17 17"><circle cx="7" cy="6.8" r="5.6" fill="none" stroke="#3b3b3b" stroke-width="1.1"/><path d="M11 11 L16 15.6" stroke="#3b3b3b" stroke-width="1.2" fill="none"/></svg>
<div class="a" style="left:194.80px;top:107.30px;width:734.00px;height:51.00px;background:#787878;border-top:1px solid #666;"></div>
<div class="a" style="left:220.30px;top:108.00px;width:1.00px;height:50.00px;background:#666;"></div>
<div class="a" style="left:320.20px;top:108.00px;width:1.00px;height:50.00px;background:#666;"></div>
<div class="a" style="left:420.00px;top:108.00px;width:1.00px;height:50.00px;background:#666;"></div>
<div class="a" style="left:620.50px;top:108.00px;width:1.00px;height:50.00px;background:#666;"></div>
<div class="a" style="left:820.30px;top:108.00px;width:1.00px;height:50.00px;background:#666;"></div>
<div class="a" style="left:201.00px;top:138.30px;width:13.20px;height:13.40px;border:2px solid #12567e;border-radius:2.5px;background:#7e7e7e;"></div>
<span class="t " style="left:226.50px;top:138.95px;font-size:10px;line-height:11.17px;letter-spacing:0.289px;color:#262626;font-weight:bold;">NAME</span>
<span class="t " style="left:901.46px;top:113.55px;font-size:11px;line-height:12.29px;letter-spacing:-0.238px;color:#2f4562;">Local Address</span>
<div class="a" style="left:920.00px;top:133.50px;width:8.00px;height:1.00px;background:#666;"></div>
<div class="a" style="left:923.00px;top:141.00px;width:5.00px;height:1.20px;background:#333;"></div>
<div class="a" style="left:194.80px;top:158.00px;width:734.00px;height:23.60px;background:#78858e;border-top:1.5px solid #2f6488;border-bottom:1px solid #2a5d80;"></div>
<div class="a" style="left:220.30px;top:159.00px;width:1.00px;height:21.50px;background:#6b7780;"></div>
<div class="a" style="left:201.00px;top:163.50px;width:13.00px;height:13.00px;background:#0e4869;border-radius:2px;"></div>
<svg class="a" style="left:201.00px;top:163.50px;" width="13" height="13" viewBox="0 0 13 13"><path d="M2.6 6.8 L5.3 9.6 L10.6 3.2" fill="none" stroke="#8fa3b0" stroke-width="1.2"/></svg>
<span class="t " style="left:226.40px;top:164.04px;font-size:11px;line-height:12.29px;letter-spacing:-0.208px;color:#223f6c;">IKEGatewayTest1</span>
<div class="a" style="left:194.80px;top:621.50px;width:734.00px;height:14.00px;background:#808080;"></div>
<div class="a" style="left:212.00px;top:622.00px;width:517.00px;height:13.00px;background:#656565;"></div>
<svg class="a" style="left:200.00px;top:624.50px;" width="6" height="9" viewBox="0 0 6 9"><path d="M5.5 0 L0.5 4.5 L5.5 9 Z" fill="#555"/></svg>
<div class="a" style="left:194.80px;top:637.30px;width:734.00px;height:1.00px;background:#8e8e8e;"></div>
<div class="a" style="left:194.80px;top:638.30px;width:734.00px;height:26.50px;background:#7e7e7e;"></div>
<span class="t " style="left:219.60px;top:645.79px;font-size:11.5px;line-height:12.85px;letter-spacing:-0.021px;color:#3a3a3a;">Add</span>
<svg class="a" style="left:200.70px;top:644.00px;" width="15" height="15" viewBox="0 0 15 15"><circle cx="7.5" cy="7.5" r="7" fill="none" stroke="#114666" stroke-width="1.05"/><path d="M3.8 7.5 H11.2 M7.5 3.8 V11.2" stroke="#114666" stroke-width="1.1"/></svg>
<span class="t " style="left:272.50px;top:645.79px;font-size:11.5px;line-height:12.85px;letter-spacing:0.093px;color:#3a3a3a;">Delete</span>
<svg class="a" style="left:253.70px;top:644.00px;" width="15" height="15" viewBox="0 0 15 15"><circle cx="7.5" cy="7.5" r="7" fill="none" stroke="#7c2b2b" stroke-width="1.05"/><path d="M3.6 7.5 H11.4" stroke="#7c2b2b" stroke-width="1.1"/></svg>
<span class="t " style="left:340.50px;top:645.79px;font-size:11.5px;line-height:12.85px;letter-spacing:-0.302px;color:#3a3a3a;">Enable</span>
<svg class="a" style="left:319.70px;top:644.00px;" width="15" height="15" viewBox="0 0 15 15"><circle cx="7.5" cy="7.5" r="7" fill="none" stroke="#1b6424" stroke-width="1.05"/><path d="M4.2 7.8 L6.6 10.3 L11 4.9" fill="none" stroke="#1b6424" stroke-width="1.2"/></svg>
<span class="t " style="left:408.60px;top:645.79px;font-size:11.5px;line-height:12.85px;letter-spacing:-0.022px;color:#3a3a3a;">Disable</span>
<svg class="a" style="left:388.00px;top:644.00px;" width="15" height="15" viewBox="0 0 15 15"><circle cx="7.5" cy="7.5" r="7" fill="none" stroke="#7c2b2b" stroke-width="1.05"/><path d="M2.8 2.8 L12.2 12.2" stroke="#7c2b2b" stroke-width="1.1"/></svg>
<span class="t " style="left:478.50px;top:645.79px;font-size:11.5px;line-height:12.85px;letter-spacing:-0.063px;color:#3a3a3a;">PDF/CSV</span>
<svg class="a" style="left:459.10px;top:644.00px;" width="15" height="15" viewBox="0 0 15 15"><circle cx="7.5" cy="7.5" r="7" fill="none" stroke="#114666" stroke-width="1.05"/><rect x="4.6" y="3.6" width="5.8" height="7.8" rx="0.8" fill="none" stroke="#114666" stroke-width="1"/><path d="M6 8.8 L7.5 6.4 L9 8.8 Z" fill="none" stroke="#114666" stroke-width="0.7"/></svg>
<svg class="a" style="left:190.00px;top:355.00px;" width="12" height="45" viewBox="0 0 12 45"><path d="M4.8 8.3 L8.6 5.6 V39.4 L4.8 36 Z" fill="#7b7b7b" stroke="#727272" stroke-width="0.8"/><path d="M5 22.3 L7.9 19.8 V24.9 Z" fill="#484848"/></svg>
<div class="a" style="left:0.00px;top:664.70px;width:928.00px;height:30.30px;background:#04090d;"></div>
<div class="a" style="left:0.00px;top:691.80px;width:928.00px;height:3.20px;background:#1a1a1a;"></div>
<span class="t " style="left:13.00px;top:672.64px;font-size:12px;line-height:13.40px;letter-spacing:-0.111px;color:#4d5155;">admin</span>
<span class="t " style="left:50.50px;top:671.24px;font-size:13px;line-height:14.52px;letter-spacing:-0.121px;color:#62676c;">|</span>
<span class="t " style="left:58.80px;top:672.64px;font-size:12px;line-height:13.40px;letter-spacing:-0.044px;color:#6c7176;">Logout</span>
<span class="t " style="left:99.00px;top:671.24px;font-size:13px;line-height:14.52px;letter-spacing:-0.121px;color:#62676c;">|</span>
<span class="t " style="left:106.50px;top:672.64px;font-size:12px;line-height:13.40px;letter-spacing:0.009px;color:#6c7176;">Last Login Time: 06/27/2022 16:23:21</span>
<span class="t " style="left:313.80px;top:671.24px;font-size:13px;line-height:14.52px;letter-spacing:-0.121px;color:#62676c;">|</span>
<span class="t " style="left:321.50px;top:672.64px;font-size:12px;line-height:13.40px;letter-spacing:-0.019px;color:#6c7176;">Session Expire Time: 07/27/2022 16:25:38</span>
<span class="t " style="left:552.00px;top:671.24px;font-size:13px;line-height:14.52px;letter-spacing:-0.121px;color:#62676c;">|</span>
<svg class="a" style="left:899.00px;top:671.00px;" width="16" height="16" viewBox="0 0 16 16"><g fill="none" stroke="#45494d" stroke-width="1.1"><path d="M7.2 2.6 H15.9 M7.2 8.4 H15.9 M7.2 14.5 H15.9"/><path d="M0.3 3 L1.9 4.7 L5 0.8 M0.3 8.9 L1.9 10.6 L5 6.7 M0.3 14.9 L1.9 16.6 L5 12.7"/></g></svg>
<span class="t " style="left:920.00px;top:672.44px;font-size:12px;line-height:13.40px;letter-spacing:-0.501px;color:#34383c;">Tasks</span>
<div class="a" style="left:320.00px;top:114.00px;width:600.00px;height:490.00px;background:#fff;border-radius:4px;box-shadow:2px 3px 13px 2px rgba(0,0,0,0.62);"></div>
<div class="a" style="left:320.00px;top:114.00px;width:600.00px;height:36.80px;background:#dcddde;border-radius:4px 4px 0 0;border-bottom:1px solid #b7b8b9;"></div>
<span class="t " style="left:332.50px;top:122.52px;font-size:16px;line-height:17.87px;letter-spacing:-0.352px;color:#222;">IKE Gateway</span>
<svg class="a" style="left:890.50px;top:124.50px;" width="15" height="15" viewBox="0 0 15 15"><circle cx="7.5" cy="7.5" r="6.8" fill="none" stroke="#111" stroke-width="1.2"/></svg>
<span class="t " style="left:895.10px;top:126.35px;font-size:11px;line-height:12.29px;letter-spacing:-1.659px;color:#111;font-weight:bold;">?</span>
<span class="t " style="left:341.25px;top:167.54px;font-size:13px;line-height:14.52px;letter-spacing:-0.488px;color:#444;font-weight:bold;">General</span>
<div class="a" style="left:399.00px;top:170.50px;width:1.00px;height:12.00px;background:#ccc;"></div>
<span class="t " style="left:410.75px;top:167.54px;font-size:13px;line-height:14.52px;letter-spacing:-0.093px;color:#6a6a6a;">Advanced Options</span>
<div class="a" style="left:330.00px;top:191.00px;width:577.00px;height:1.00px;background:#c4c4c4;"></div>
<div class="a" style="left:330.00px;top:189.00px;width:66.60px;height:2.20px;background:#1b98e0;border-radius:0 2px 0 0;"></div>
<span class="t " style="left:426.04px;top:203.04px;font-size:11px;line-height:12.29px;letter-spacing:-0.197px;color:#69717a;">Name</span>
<span class="t " style="left:418.42px;top:227.34px;font-size:11px;line-height:12.29px;letter-spacing:-0.073px;color:#69717a;">Version</span>
<span class="t " style="left:390.17px;top:250.74px;font-size:11px;line-height:12.29px;letter-spacing:-0.219px;color:#69717a;">Address Type</span>
<span class="t " style="left:411.56px;top:278.35px;font-size:11px;line-height:12.29px;letter-spacing:0.026px;color:#69717a;">Interface</span>
<span class="t " style="left:376.40px;top:302.05px;font-size:11px;line-height:12.29px;letter-spacing:-0.259px;color:#69717a;">Local IP Address</span>
<span class="t " style="left:353.82px;top:329.75px;font-size:11px;line-height:12.29px;letter-spacing:-0.261px;color:#69717a;">Peer IP Address Type</span>
<span class="t " style="left:391.69px;top:358.44px;font-size:11px;line-height:12.29px;letter-spacing:-0.261px;color:#69717a;">Peer Address</span>
<span class="t " style="left:382.63px;top:382.05px;font-size:11px;line-height:12.29px;letter-spacing:0.161px;color:#69717a;">Authentication</span>
<span class="t " style="left:381.29px;top:408.85px;font-size:11px;line-height:12.29px;letter-spacing:-0.223px;color:#69717a;">Pre-shared Key</span>
<span class="t " style="left:339.60px;top:432.85px;font-size:11px;line-height:12.29px;letter-spacing:-0.136px;color:#69717a;">Confirm Pre-shared Key</span>
<span class="t " style="left:363.17px;top:456.85px;font-size:11px;line-height:12.29px;letter-spacing:0.016px;color:#69717a;">Local Identification</span>
<span class="t " style="left:366.27px;top:485.05px;font-size:11px;line-height:12.29px;letter-spacing:0.015px;color:#69717a;">Peer Identification</span>
<span class="t " style="left:407.22px;top:513.04px;font-size:11px;line-height:12.29px;letter-spacing:-0.043px;color:#69717a;">Comment</span>
<svg class="a" style="left:0;top:0" width="928" height="695"><rect x="460.50" y="200.40" width="446.10" height="18.70" rx="1.9" fill="#fff" stroke="#a8aeb4" stroke-width="1"/></svg>
<span class="t " style="left:465.50px;top:203.04px;font-size:11px;line-height:12.29px;letter-spacing:-0.208px;color:#2e2e2e;">IKEGatewayTest1</span>
<svg class="a" style="left:0;top:0" width="928" height="695"><rect x="460.50" y="224.70" width="446.10" height="18.60" rx="1.9" fill="#fff" stroke="#a8aeb4" stroke-width="1"/></svg>
<span class="t " style="left:465.50px;top:227.34px;font-size:11px;line-height:12.29px;letter-spacing:-0.092px;color:#2e2e2e;">IKEv2 only mode</span>
<svg class="a" style="left:889.50px;top:231.00px;" width="10" height="6" viewBox="0 0 10 6"><path d="M0.6 0.6 L5 5 L9.4 0.6" fill="none" stroke="#62686e" stroke-width="1"/></svg>
<svg class="a" style="left:461.90px;top:252.10px;" width="14" height="14" viewBox="0 0 14 14"><circle cx="7" cy="7" r="6.7" fill="#3a94f2"/><circle cx="7" cy="7" r="2.3" fill="#fff"/></svg>
<span class="t " style="left:480.40px;top:252.94px;font-size:11px;line-height:12.29px;letter-spacing:-0.067px;color:#555;">IPv4</span>
<svg class="a" style="left:515.50px;top:252.10px;" width="14" height="14" viewBox="0 0 14 14"><circle cx="7" cy="7" r="6.2" fill="#fff" stroke="#8e8e8e" stroke-width="1"/></svg>
<span class="t " style="left:534.10px;top:252.94px;font-size:11px;line-height:12.29px;letter-spacing:-0.067px;color:#555;">IPv6</span>
<svg class="a" style="left:0;top:0" width="928" height="695"><rect x="460.50" y="275.60" width="446.10" height="18.60" rx="1.9" fill="#fff" stroke="#a8aeb4" stroke-width="1"/></svg>
<span class="t " style="left:465.50px;top:278.35px;font-size:11px;line-height:12.29px;letter-spacing:0.326px;color:#2e2e2e;">ethernet1/1</span>
<svg class="a" style="left:889.50px;top:282.00px;" width="10" height="6" viewBox="0 0 10 6"><path d="M0.6 0.6 L5 5 L9.4 0.6" fill="none" stroke="#62686e" stroke-width="1"/></svg>
<svg class="a" style="left:0;top:0" width="928" height="695"><rect x="460.50" y="299.80" width="446.10" height="18.60" rx="1.9" fill="#fff" stroke="#a8aeb4" stroke-width="1"/></svg>
<svg class="a" style="left:889.50px;top:306.30px;" width="10" height="6" viewBox="0 0 10 6"><path d="M0.6 0.6 L5 5 L9.4 0.6" fill="none" stroke="#62686e" stroke-width="1"/></svg>
<div class="a" style="left:465.00px;top:304.20px;width:87.80px;height:10.60px;background:linear-gradient(90deg,#d9d9d9,#ededed 55%,#dcdcdc);"></div>
<svg class="a" style="left:461.60px;top:331.00px;" width="14" height="14" viewBox="0 0 14 14"><circle cx="7" cy="7" r="6.7" fill="#3a94f2"/><circle cx="7" cy="7" r="2.3" fill="#fff"/></svg>
<span class="t " style="left:480.30px;top:331.75px;font-size:11px;line-height:12.29px;letter-spacing:-0.354px;color:#555;">IP</span>
<svg class="a" style="left:503.70px;top:331.00px;" width="14" height="14" viewBox="0 0 14 14"><circle cx="7" cy="7" r="6.2" fill="#fff" stroke="#8e8e8e" stroke-width="1"/></svg>
<span class="t " style="left:522.00px;top:331.75px;font-size:11px;line-height:12.29px;letter-spacing:0.139px;color:#555;">FQDN</span>
<svg class="a" style="left:566.50px;top:331.00px;" width="14" height="14" viewBox="0 0 14 14"><circle cx="7" cy="7" r="6.2" fill="#fff" stroke="#8e8e8e" stroke-width="1"/></svg>
<span class="t " style="left:585.50px;top:331.75px;font-size:11px;line-height:12.29px;letter-spacing:-0.034px;color:#555;">Dynamic</span>
<svg class="a" style="left:0;top:0" width="928" height="695"><rect x="460.50" y="355.60" width="446.10" height="18.60" rx="1.9" fill="#fff" stroke="#a8aeb4" stroke-width="1"/></svg>
<svg class="a" style="left:889.50px;top:361.80px;" width="10" height="6" viewBox="0 0 10 6"><path d="M0.6 0.6 L5 5 L9.4 0.6" fill="none" stroke="#62686e" stroke-width="1"/></svg>
<div class="a" style="left:463.00px;top:358.20px;width:80.80px;height:12.60px;background:linear-gradient(90deg,#dedede,#e6e6e6 50%,#dadada);"></div>
<svg class="a" style="left:461.60px;top:383.10px;" width="14" height="14" viewBox="0 0 14 14"><circle cx="7" cy="7" r="6.7" fill="#3a94f2"/><circle cx="7" cy="7" r="2.3" fill="#fff"/></svg>
<span class="t " style="left:480.30px;top:383.85px;font-size:11px;line-height:12.29px;letter-spacing:-0.275px;color:#555;">Pre-Shared Key</span>
<svg class="a" style="left:567.50px;top:383.10px;" width="14" height="14" viewBox="0 0 14 14"><circle cx="7" cy="7" r="6.2" fill="#fff" stroke="#8e8e8e" stroke-width="1"/></svg>
<span class="t " style="left:586.00px;top:383.85px;font-size:11px;line-height:12.29px;letter-spacing:0.089px;color:#555;">Certificate</span>
<svg class="a" style="left:0;top:0" width="928" height="695"><rect x="460.50" y="406.60" width="446.10" height="18.60" rx="1.9" fill="#fff" stroke="#a8aeb4" stroke-width="1"/></svg>
<svg class="a" style="left:0;top:0" width="928" height="695"><rect x="460.50" y="430.80" width="446.10" height="18.60" rx="1.9" fill="#fff" stroke="#a8aeb4" stroke-width="1"/></svg>
<span class="t" id="pw" style="left:465.6px;top:407.10px;font-size:14px;line-height:16px;letter-spacing:1.5px;color:#111;">••••••••</span>
<span class="t" id="pw" style="left:465.6px;top:431.30px;font-size:14px;line-height:16px;letter-spacing:1.5px;color:#111;">••••••••</span>
<svg class="a" style="left:0.00px;top:0.00px;" width="928" height="695" viewBox="0 0 928 695"><path d="M526.7 414.7 L546.7 408.5 L546.7 420.9 Z" fill="#0a0af0"/><path d="M544.7 414.7 H636.7" stroke="#0a0af0" stroke-width="4.2" stroke-linecap="round" fill="none"/></svg>
<svg class="a" style="left:0.00px;top:0.00px;" width="928" height="695" viewBox="0 0 928 695"><path d="M528.8 439.7 L548.8 433.5 L548.8 445.9 Z" fill="#0a0af0"/><path d="M546.8 439.7 H636.7" stroke="#0a0af0" stroke-width="4.2" stroke-linecap="round" fill="none"/></svg>
<svg class="a" style="left:0;top:0" width="928" height="695"><rect x="460.50" y="454.60" width="219.50" height="18.60" rx="1.9" fill="#fff" stroke="#a8aeb4" stroke-width="1"/></svg>
<span class="t " style="left:465.50px;top:456.85px;font-size:11px;line-height:12.29px;letter-spacing:0.028px;color:#2e2e2e;">None</span>
<svg class="a" style="left:663.80px;top:461.30px;" width="10" height="6" viewBox="0 0 10 6"><path d="M0.6 0.6 L5 5 L9.4 0.6" fill="none" stroke="#62686e" stroke-width="1"/></svg>
<svg class="a" style="left:0;top:0" width="928" height="695"><rect x="687.90" y="454.60" width="215.50" height="18.60" rx="1.9" fill="#fff" stroke="#a8aeb4" stroke-width="1"/></svg>
<svg class="a" style="left:0;top:0" width="928" height="695"><rect x="460.50" y="482.60" width="219.50" height="18.60" rx="1.9" fill="#fff" stroke="#a8aeb4" stroke-width="1"/></svg>
<span class="t " style="left:465.50px;top:485.05px;font-size:11px;line-height:12.29px;letter-spacing:0.028px;color:#2e2e2e;">None</span>
<svg class="a" style="left:663.80px;top:489.50px;" width="10" height="6" viewBox="0 0 10 6"><path d="M0.6 0.6 L5 5 L9.4 0.6" fill="none" stroke="#62686e" stroke-width="1"/></svg>
<svg class="a" style="left:0;top:0" width="928" height="695"><rect x="687.90" y="482.60" width="215.50" height="18.60" rx="1.9" fill="#fff" stroke="#a8aeb4" stroke-width="1"/></svg>
<svg class="a" style="left:0;top:0" width="928" height="695"><rect x="460.50" y="510.80" width="446.10" height="18.60" rx="1.9" fill="#fff" stroke="#a8aeb4" stroke-width="1"/></svg>
<div class="a" style="left:753.30px;top:559.20px;width:76.60px;height:29.60px;background:#12a3e6;border:2px solid #0d3f5a;border-radius:15px;"></div>
<span class="t " style="left:783.60px;top:566.79px;font-size:11.5px;line-height:12.85px;letter-spacing:-0.525px;color:#fff;font-weight:bold;">OK</span>
<div class="a" style="left:835.00px;top:560.20px;width:74.80px;height:27.60px;background:#fff;border:1px solid #c9c9c9;border-radius:14px;"></div>
<span class="t " style="left:856.20px;top:567.34px;font-size:11px;line-height:12.29px;letter-spacing:-0.289px;color:#555;">Cancel</span>
</body></html>
